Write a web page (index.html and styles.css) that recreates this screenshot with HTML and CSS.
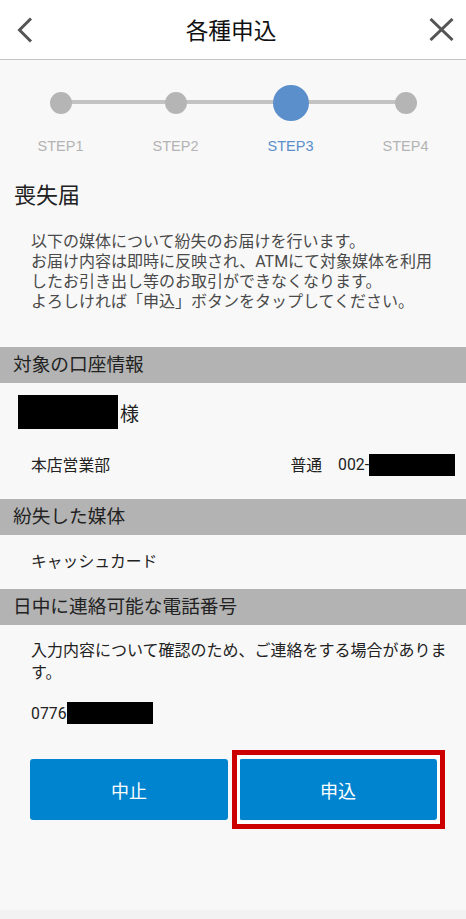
FILE: index.html
```html
<!DOCTYPE html>
<html lang="ja">
<head>
    <meta charset="utf-8">
    <title>各種申込</title>
    <link rel="stylesheet" href="styles.css">
</head>
<body>

<div class="screen">
    <header class="app-bar">
        <button class="nav-btn" aria-label="戻る">
            <svg width="16" height="26" viewBox="0 0 16 26"><polyline points="14,1.5 2.5,13 14,24.5" fill="none" stroke="#555" stroke-width="3"/></svg>
        </button>
        <h1 class="app-title">各種申込</h1>
        <button class="nav-btn" aria-label="閉じる">
            <svg width="25" height="23" viewBox="0 0 25 23"><path d="M1.5 1 L23.5 22 M23.5 1 L1.5 22" fill="none" stroke="#555" stroke-width="3"/></svg>
        </button>
    </header>

    <ol class="stepper">
        <li class="step"><span class="dot-box"><span class="dot"></span></span><span class="step-label">STEP1</span></li>
        <li class="step"><span class="dot-box"><span class="dot"></span></span><span class="step-label">STEP2</span></li>
        <li class="step current"><span class="dot-box"><span class="dot"></span></span><span class="step-label">STEP3</span></li>
        <li class="step"><span class="dot-box"><span class="dot"></span></span><span class="step-label">STEP4</span></li>
    </ol>

    <section class="intro">
        <h2 class="form-title">喪失届</h2>
        <p class="lead">以下の媒体について紛失のお届けを行います。<br>お届け内容は即時に反映され、ATMにて対象媒体を利用したお引き出し等のお取引ができなくなります。<br>よろしければ「申込」ボタンをタップしてください。</p>
    </section>

    <h3 class="band">対象の口座情報</h3>
    <div class="holder"><span class="masked name-mask"></span><span class="honorific">様</span></div>
    <div class="account-row">
        <span>本店営業部</span>
        <span class="account-no">普通<span class="acct-num">002-</span><span class="masked acct-mask"></span></span>
    </div>

    <h3 class="band">紛失した媒体</h3>
    <div class="item">キャッシュカード</div>

    <h3 class="band">日中に連絡可能な電話番号</h3>
    <p class="note">入力内容について確認のため、ご連絡をする場合があります。</p>
    <div class="phone">0776<span class="masked phone-mask"></span></div>

    <div class="actions">
        <button class="btn">中止</button>
        <button class="btn btn-marked">申込</button>
    </div>
</div>

</body>
</html>
```

FILE: styles.css
```css
:root {
    --page-bg: #f8f8f8;
    --band-bg: #b3b3b3;
    --text: #222222;
    --muted: #b3b3b3;
    --accent: #5b8fcb;
    --button-bg: #0084cf;
}

* {
    box-sizing: border-box;
}

body {
    margin: 0;
    background-color: #f2f2f2;
    color: var(--text);
    font-family: Roboto, "Noto Sans CJK JP", sans-serif;
}

.screen {
    min-height: 910px;
    background-color: var(--page-bg);
}

/* top bar */
.app-bar {
    height: 60px;
    display: flex;
    align-items: center;
    justify-content: space-between;
    padding: 0 12px 0 17px;
    background-color: #ffffff;
    border-bottom: 1px solid #c6c6c6;
}

.nav-btn {
    background: none;
    border: none;
    padding: 0;
    display: flex;
    cursor: pointer;
}

.app-title {
    margin: 0;
    font-size: 22.7px;
    font-weight: normal;
    color: #111;
}

/* progress steps */
.stepper {
    position: relative;
    list-style: none;
    margin: 0;
    padding: 24px 0 0 3px;
    display: grid;
    grid-template-columns: repeat(4, 115px);
}

.stepper::before {
    content: "";
    position: absolute;
    top: 40px;
    left: 61px;
    width: 346px;
    height: 4px;
    background-color: #c3c3c3;
}

.step {
    position: relative;
    display: flex;
    flex-direction: column;
    align-items: center;
}

.dot-box {
    height: 37px;
    display: flex;
    align-items: center;
}

.dot {
    width: 22px;
    height: 22px;
    border-radius: 50%;
    background-color: #b5b5b5;
}

.current .dot {
    width: 36px;
    height: 36px;
    background-color: var(--accent);
}

.step-label {
    margin-top: 17px;
    font-family: "Liberation Sans", sans-serif;
    font-size: 14.5px;
    line-height: 17px;
    color: var(--muted);
}

.current .step-label {
    color: var(--accent);
}

/* form intro */
.intro {
    padding: 26px 0 35px;
}

.form-title {
    margin: 0 0 0 14px;
    font-size: 22px;
    line-height: 30px;
    font-weight: normal;
}

.lead {
    margin: 21px 28px 0 31px;
    font-size: 16px;
    line-height: 20px;
    color: #4a4a4a;
}

.band {
    margin: 0;
    height: 36px;
    padding-left: 13px;
    font-size: 18.7px;
    line-height: 36px;
    font-weight: normal;
    background-color: var(--band-bg);
}

.masked {
    display: inline-block;
    background-color: #000;
}

.holder {
    display: flex;
    align-items: center;
    padding: 12px 0 0 18px;
}

.name-mask {
    width: 100px;
    height: 34px;
}

.honorific {
    margin-left: 2px;
    font-size: 19px;
}

.account-row {
    display: flex;
    justify-content: space-between;
    align-items: center;
    padding: 24px 11px 23px 31px;
    font-size: 15.8px;
}

.account-no {
    display: flex;
    align-items: center;
}

.acct-num {
    margin-left: 16px;
}

.acct-mask {
    width: 86px;
    height: 22px;
}

.item {
    padding: 15px 0 15px 31px;
    font-size: 15.8px;
    line-height: 24px;
}

.note {
    margin: 15px 16px 0 31px;
    font-size: 16px;
    line-height: 22px;
}

.phone {
    display: flex;
    align-items: center;
    padding: 18px 0 0 31px;
    font-size: 15.8px;
}

.phone-mask {
    width: 86px;
    height: 22px;
}

/* buttons */
.actions {
    display: flex;
    gap: 11px;
    padding: 35px 29px 0 30px;
}

.btn {
    position: relative;
    flex: 1;
    height: 61px;
    border: none;
    border-radius: 3px;
    background-color: var(--button-bg);
    color: #fff;
    font-family: inherit;
    font-size: 18px;
    cursor: pointer;
}

/* red square frame drawn around the submit button */
.btn-marked::after {
    content: "";
    position: absolute;
    inset: -9px -8px -9px -7px;
    border: 5px solid #cc0000;
    box-shadow: inset 0 0 0 3px #ffffff;
    pointer-events: none;
}
```
